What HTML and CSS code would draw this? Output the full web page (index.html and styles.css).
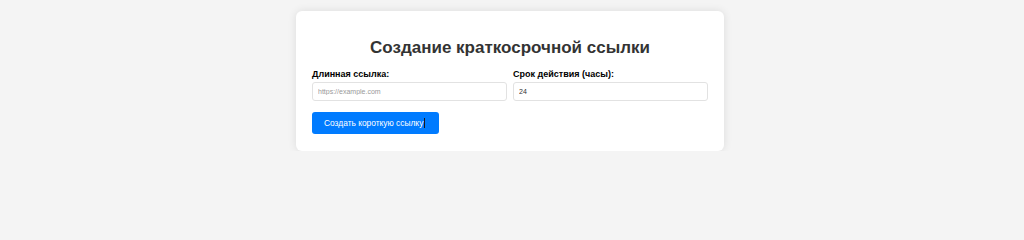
FILE: index.html
```html
<!DOCTYPE html>
<html lang="ru">
<head>
<meta charset="utf-8">
<title>Создание краткосрочной ссылки</title>
<link rel="stylesheet" href="styles.css">
</head>
<body>
<div class="page">
  <div class="card">
    <h2 class="title">Создание краткосрочной ссылки</h2>
    <form class="form">
      <div class="fields">
        <div class="field">
          <label class="label" for="url">Длинная ссылка:</label>
          <input class="input" id="url" type="text" placeholder="https://example.com">
        </div>
        <div class="field">
          <label class="label" for="hours">Срок действия (часы):</label>
          <input class="input" id="hours" type="text" value="24">
        </div>
      </div>
      <button class="btn" type="button">Создать короткую ссылку<span class="caret"></span></button>
    </form>
  </div>
</div>
</body>
</html>
```
FILE: styles.css
```css
html, body {
  margin: 0;
  padding: 0;
  background: #f4f4f4;
  font-family: "Liberation Sans", Arial, sans-serif;
  color: #333;
}
.page {
  padding: 11px 4px 0 0;
}
.card {
  width: 428px;
  box-sizing: border-box;
  margin: 0 auto;
  background: #fff;
  border-radius: 6px;
  box-shadow: 0 0 8px rgba(0, 0, 0, 0.1);
  padding: 16px 16px 17px;
}
.title {
  margin: 10px 0 10px;
  text-align: center;
  font-size: 17px;
  line-height: 22px;
  font-weight: bold;
  color: #333;
}
.form {
  display: flex;
  flex-direction: column;
  align-items: flex-start;
  gap: 11px;
}
.fields {
  display: flex;
  gap: 6px;
  width: 100%;
}
.field {
  flex: 1;
  display: flex;
  flex-direction: column;
  gap: 2px;
}
.label {
  font-size: 9px;
  line-height: 11px;
  font-weight: bold;
  color: #000;
}
.input {
  box-sizing: border-box;
  height: 19px;
  width: 100%;
  margin: 0;
  padding: 0 5px;
  border: 1px solid #e2e2e2;
  border-radius: 3px;
  font-family: "Liberation Sans", Arial, sans-serif;
  font-size: 7px;
  color: #333;
  outline: none;
}
.input::placeholder {
  color: #999;
}
.btn {
  height: 22px;
  padding: 0 14px 0 12px;
  border: none;
  border-radius: 3px;
  background: #007bff;
  color: #fff;
  font-family: "Liberation Sans", Arial, sans-serif;
  font-size: 8.4px;
  cursor: pointer;
}
.caret {
  display: inline-block;
  width: 1px;
  height: 10px;
  background: #1a1a1a;
  vertical-align: middle;
  margin-left: 1px;
}
```
